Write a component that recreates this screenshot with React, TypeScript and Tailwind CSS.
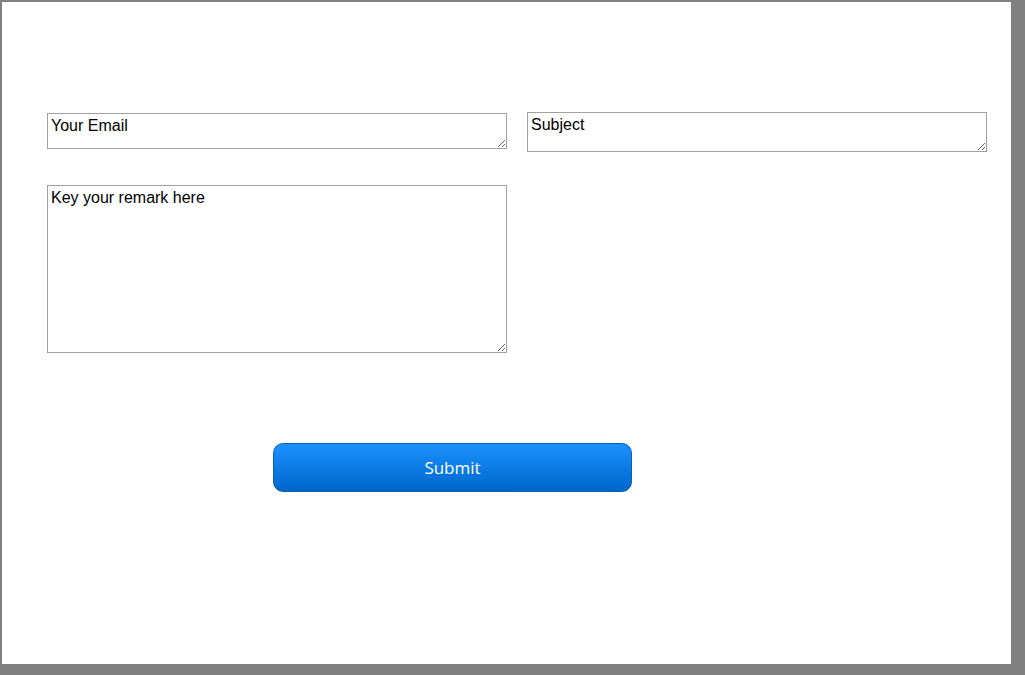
export default function App() {
  const field =
    "border border-[#a0a0a0] bg-white px-[3px] pt-[2px] text-[16px] leading-[19px] text-black resize-y outline-none placeholder:text-black";
  return (
    <div className="w-[1025px] h-[675px] bg-[#808080] pt-[2px] pl-[2px]" style={{ fontFamily: "Arial, 'Liberation Sans', sans-serif" }}>
      <div className="w-[1009px] h-[662px] bg-white pt-[110px] pl-[45px]">
        <div className="flex items-start gap-[20px]">
          <textarea className={`${field} w-[460px] h-[36px] mt-[1px]`} placeholder="Your Email" />
          <textarea className={`${field} w-[460px] h-[40px]`} placeholder="Subject" />
        </div>
        <textarea className={`${field} block w-[460px] h-[168px] mt-[33px]`} placeholder="Key your remark here" />
        <div className="pl-[226px] mt-[90px]">
          <button
            className="w-[359px] h-[49px] rounded-[10px] border border-[#0a5fb0] bg-gradient-to-b from-[#1b92ff] to-[#0066cc] text-white text-[17px]"
            style={{ fontFamily: "'Open Sans', 'DejaVu Sans', sans-serif" }}
          >
            Submit
          </button>
        </div>
      </div>
    </div>
  );
}
